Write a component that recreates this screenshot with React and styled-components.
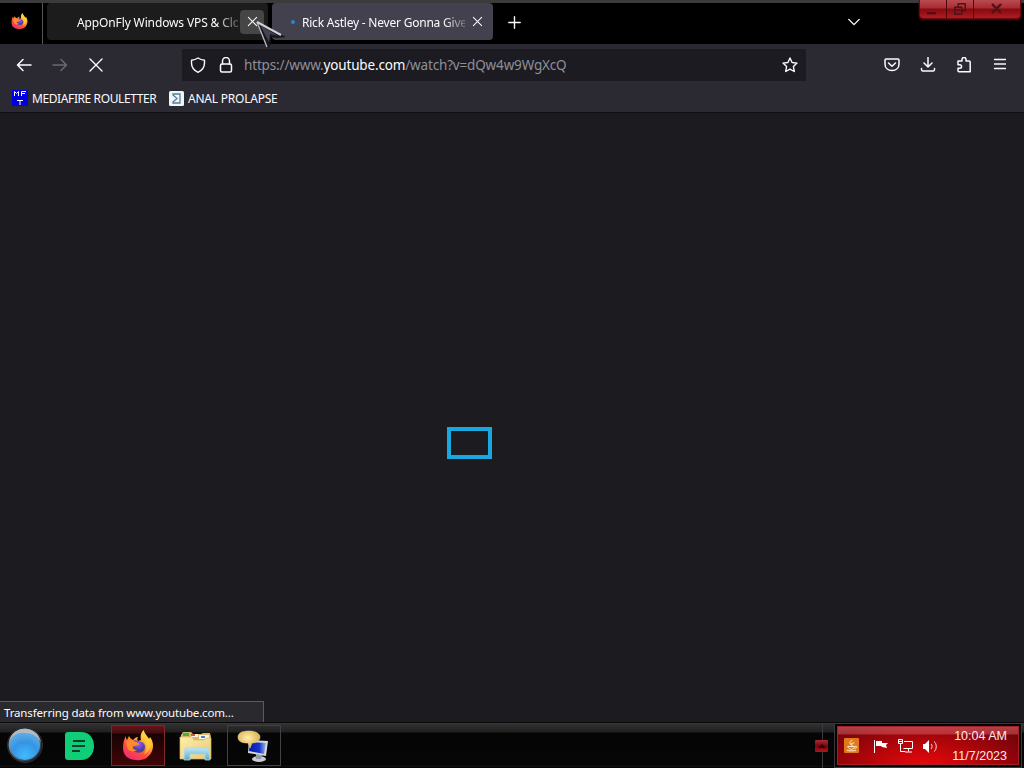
import React from "react";
import styled, { createGlobalStyle } from "styled-components";

const GlobalStyle = createGlobalStyle`
  * {
    box-sizing: border-box;
  }
  body {
    margin: 0;
    background: #1c1b22;
    overflow: hidden;
  }
`;

const Desktop = styled.div`
  position: relative;
  display: flex;
  flex-direction: column;
  width: 1024px;
  height: 768px;
  overflow: hidden;
  background: #1c1b20;
  color: #fbfbfe;
  font-family: "Noto Sans", "Open Sans", sans-serif;
  font-size: 12px;
  white-space: nowrap;

  svg {
    display: block;
    flex: none;
  }
`;

const TabStrip = styled.div`
  display: flex;
  flex: 0 0 44px;
  border-top: 3px solid #3b3b3c;
  background: #000;
`;

const PinnedLogo = styled.div`
  display: flex;
  width: 43px;
  padding: 10px 0 0 11px;
  border-right: 1px solid #55555a;
`;

const Tab = styled.div`
  display: flex;
  align-items: center;
  width: ${(p) => p.$width}px;
  height: 37px;
  margin-left: ${(p) => p.$gap}px;
  padding-left: ${(p) => p.$inset}px;
  border-radius: 4px;
  background: ${(p) => (p.$active ? "#42414d" : "#1c1c1d")};
`;

const TabTitle = styled.div`
  width: ${(p) => p.$width}px;
  padding-top: 2px;
  line-height: 20px;
  letter-spacing: ${(p) => p.$spacing}px;
  mask-image: linear-gradient(to left, rgba(0, 0, 0, 0.25), #000 22px);
`;

const CloseButton = styled.div`
  display: flex;
  align-items: center;
  justify-content: center;
  width: 24px;
  height: 24px;
  margin-left: ${(p) => (p.$hover ? 2 : 0)}px;
  border-radius: 4px;
  background: ${(p) => (p.$hover ? "#464646" : "transparent")};
`;

const LoadingDot = styled.div`
  width: 4px;
  height: 4px;
  margin-right: 7px;
  border-radius: 50%;
  background: #2584d8;
`;

const NewTab = styled.div`
  padding: 13px 0 0 15px;
`;

const ListTabs = styled.div`
  margin-left: auto;
  padding: 12px 58px 0 0;
`;

const WindowButtons = styled.div`
  display: flex;
  width: 102px;
  height: 19px;
  margin: -3px 3px 0 0;
  border: 1px solid #690b10;
  border-top: 0;
  border-radius: 0 0 4px 4px;
  box-shadow: 0 1px 2px #5a0d0d;
  background: linear-gradient(#b84c50 0, #a92a30 45%, #810b11 50%, #b51a20 100%);
`;

const WindowButton = styled.div`
  display: flex;
  justify-content: center;
  width: ${(p) => p.$width}px;
  padding-top: 2px;
  border-right: 1px solid #4e060a;

  &:last-child {
    border-right: 0;
  }
`;

const NavBar = styled.div`
  display: flex;
  align-items: center;
  flex: 0 0 41px;
  padding: 0 16px;
  background: #2b2a33;
`;

const NavButtons = styled.div`
  display: flex;
  gap: 20px;
  width: 166px;
`;

const UrlBar = styled.div`
  display: flex;
  align-items: center;
  width: 624px;
  height: 32px;
  padding: 0 8px;
  gap: 12px;
  background: #1c1b22;
`;

const Url = styled.div`
  flex: 1;
  margin-left: -2px;
  color: #8f8f98;
  font-size: 13.5px;
  letter-spacing: ${(p) => p.$spacing}px;

  b {
    color: #fbfbfe;
    font-weight: 400;
  }
`;

const NavActions = styled.div`
  display: flex;
  gap: 20px;
  margin-left: auto;
`;

const Bookmarks = styled.div`
  display: flex;
  align-items: center;
  flex: 0 0 28px;
  gap: 12px;
  padding: 0 0 1px 12px;
  border-bottom: 1px solid #101014;
  background: #2b2a33;
`;

const Bookmark = styled.div`
  display: flex;
  align-items: center;
  gap: 4px;
  width: ${(p) => p.$width}px;
  letter-spacing: ${(p) => p.$spacing}px;
`;

const Page = styled.main`
  display: flex;
  flex: 1;
  flex-direction: column;
  justify-content: space-between;
  background: #1c1b20;
`;

const LoadingFrame = styled.div`
  width: 45px;
  height: 32px;
  margin: 314px 0 0 447px;
  border: 4px solid #18a7df;
`;

const StatusBar = styled.div`
  width: 264px;
  height: 21px;
  padding-left: 4px;
  border: 1px solid #5c5b62;
  border-width: 1px 1px 0 0;
  background: #2a2a2e;
  font-size: 11.5px;
  line-height: 22px;
  letter-spacing: ${(p) => p.$spacing}px;
`;

const Taskbar = styled.footer`
  display: flex;
  flex: 0 0 46px;
  border-top: 1px solid #08080a;
  background: linear-gradient(#414143 0, #303032 1px, #202021 9px, #050506 10px, #060607 42px, #111 43px, #000 100%);
`;

const TaskItem = styled.div`
  display: flex;
  align-items: center;
  justify-content: center;
  width: ${(p) => p.$width || 54}px;
  height: 41px;
  margin: 2px 4px 0 0;
  border: 1px solid ${(p) => p.$border || "transparent"};
  background: ${(p) =>
    p.$red ? "linear-gradient(#671517 0, #440d0f 7px, #180304 8px, #410507 100%)" : "transparent"};
`;

const TrayHandle = styled.div`
  display: flex;
  align-items: center;
  width: 22px;
  margin-left: auto;
  background: linear-gradient(#3b3b3d, #3b3b3d) 7px 0 / 1px 100% no-repeat;
`;

const TrayArrow = styled.div`
  display: flex;
  align-items: center;
  justify-content: center;
  width: 13px;
  height: 12px;
  border-radius: 1px;
  background: linear-gradient(#a92c35, #78050c 50%, #a71920);
`;

const Tray = styled.div`
  display: flex;
  align-items: center;
  width: 182px;
  height: 39px;
  margin: 3px 5px 0 0;
  padding: 0 11px 0 6px;
  border: 1px solid #a52027;
  box-shadow: 0 0 0 2px #060304, 0 0 0 3px #39393b;
  background:
    linear-gradient(rgba(255, 155, 160, 0.4) 0, rgba(255, 125, 130, 0.35) 7px, transparent 8px),
    radial-gradient(ellipse at 48% 115%, #f2080b 0, #bd060a 38%, #78040a 85%);
`;

const TrayIcons = styled.div`
  display: grid;
  grid-template-columns: 29px 25px 24px 16px;
  align-items: center;
`;

const Clock = styled.div`
  margin-left: auto;
  color: #ffeaea;
  font-family: "Liberation Sans", Arial, sans-serif;
  font-size: 12.5px;
  line-height: 20px;
  text-align: right;
`;

const Pointer = styled.div`
  position: absolute;
  top: 20px;
  left: 255px;
`;

const Stroke = ({ size = 16, box = 16, width = 1.3, color = "#fbfbfe", children }) => (
  <svg
    width={size}
    height={size}
    viewBox={`0 0 ${box} ${box}`}
    fill="none"
    stroke={color}
    strokeWidth={width}
    strokeLinecap="round"
    strokeLinejoin="round"
  >
    {children}
  </svg>
);

const Cross = ({ size, width }) => (
  <Stroke size={size} width={width}>
    <path d="M2 2l12 12M14 2L2 14" />
  </Stroke>
);

const FirefoxLogo = ({ size, id }) => (
  <svg width={size} height={size} viewBox="0 0 32 32">
    <defs>
      <linearGradient id={`${id}-flame`} x1="0.8" y1="0" x2="0.2" y2="1">
        <stop offset="0" stopColor="#fff04a" />
        <stop offset="0.35" stopColor="#ffb02f" />
        <stop offset="0.65" stopColor="#ff5038" />
        <stop offset="1" stopColor="#ed267e" />
      </linearGradient>
      <radialGradient id={`${id}-globe`} cx="0.5" cy="0.3">
        <stop offset="0" stopColor="#a15bff" />
        <stop offset="1" stopColor="#4940a8" />
      </radialGradient>
    </defs>
    <path
      fill={`url(#${id}-flame)`}
      d="M4 6c0 2 0 3 1 4l2-4c1 2 2 3 4 4 2-2 3-3 5-3-1 2-1 3 0 4l3-1c-1-4 0-8 3-10 0 4 4 6 5 9l1-2c3 4 4 9 2 14-3 7-9 10-16 9C6 30 1 25 1 18 1 13 2 9 4 6z"
    />
    <path
      fill={`url(#${id}-globe)`}
      d="M10 12c2-2 4-2 6-1l4 1c4 2 4 8 0 10-5 2-10-1-10-5l4-1c3-1 4-2 2-3z"
    />
    <path fill="#ff8b2c" d="M4 12c2-2 5-2 7-1l4 1c1 2-1 3-4 4-1 2 1 4 4 4-4 3-9 1-10-3z" />
    <path fill="#ffd23c" d="M20 8c5 4 6 11 2 16 7-3 9-11 4-16l-4-6c-2 1-3 4-2 6z" opacity="0.65" />
  </svg>
);

const StartOrb = () => (
  <svg width="38" height="38" viewBox="0 0 38 38">
    <defs>
      <radialGradient id="orb-face" cx="0.5" cy="0.85" r="0.8">
        <stop offset="0" stopColor="#45b9ff" />
        <stop offset="0.55" stopColor="#3495e4" />
        <stop offset="1" stopColor="#67afe4" />
      </radialGradient>
      <linearGradient id="orb-ring" x1="0" y1="0" x2="1" y2="1">
        <stop offset="0" stopColor="#bbb" />
        <stop offset="0.45" stopColor="#686d70" />
        <stop offset="1" stopColor="#182029" />
      </linearGradient>
    </defs>
    <circle cx="19" cy="18" r="17.5" fill="#0c1218" stroke="#27323b" />
    <circle cx="19" cy="18" r="16.5" fill="url(#orb-ring)" />
    <circle cx="19" cy="18" r="15" fill="url(#orb-face)" />
    <path
      d="M3 14C6 5 13 1 21 2c8 1 12 6 14 13-4-6-9-9-16-9-7-1-12 2-16 8z"
      fill="#b9bdc0"
      opacity="0.9"
    />
  </svg>
);

const DocsLogo = () => (
  <svg width="30" height="28" viewBox="0 0 30 28">
    <path d="M3 0h13c8 0 13 6 13 14s-5 14-13 14H3c-2 0-3-1-3-3V3c0-2 1-3 3-3z" fill="#10ce78" />
    <path d="M8 9h12M7 14h13M7 19h8" stroke="#073f2b" strokeWidth="2" />
  </svg>
);

const Folder = () => (
  <svg width="34" height="32" viewBox="0 0 34 32">
    <defs>
      <linearGradient id="folder-face" x1="0" y1="0" x2="1" y2="1">
        <stop offset="0" stopColor="#fff0ac" />
        <stop offset="1" stopColor="#e4c775" />
      </linearGradient>
      <linearGradient id="folder-stand" x1="0" y1="0" x2="0" y2="1">
        <stop offset="0" stopColor="#c2e7f2" />
        <stop offset="1" stopColor="#53aad0" />
      </linearGradient>
    </defs>
    <path d="M2 5l2-3h8l2 2h8l2-1h7l1 4v22H2z" fill="#d9ba62" />
    <path d="M4 3h6v3H4z" fill="#42ad52" />
    <path d="M12 4h7v3h-7zM20 5h10v4H20z" fill="#f7f7ef" />
    <path d="M12 4h4v2h-4z" fill="#dc553c" />
    <path d="M22 6h4v2h-4z" fill="#428ac1" />
    <path d="M1 7h12l2 3h10l2-2h5v21H1z" fill="url(#folder-face)" stroke="#d5b768" strokeWidth="0.7" />
    <path
      d="M6 18h23l2 12h-5v-6H11v6H5z"
      fill="url(#folder-stand)"
      stroke="#a5d8e8"
      strokeWidth="0.8"
    />
  </svg>
);

const ChatMonitor = () => (
  <svg width="34" height="34" viewBox="0 0 34 34">
    <defs>
      <radialGradient id="bubble-fill" cx="0.45" cy="0.4">
        <stop offset="0" stopColor="#fff0ac" />
        <stop offset="1" stopColor="#dfb65a" />
      </radialGradient>
      <linearGradient id="monitor-fill">
        <stop offset="0" stopColor="#0718aa" />
        <stop offset="0.6" stopColor="#1632c9" />
        <stop offset="1" stopColor="#9cb4e8" />
      </linearGradient>
    </defs>
    <ellipse cx="22" cy="30" rx="7" ry="3" fill="#c8ccce" />
    <path d="M19 25l6 1-1 4h-5z" fill="#919ba3" />
    <path d="M12 11l19 1-2 15-18-3z" fill="#d6d9dc" />
    <path d="M13 13l16 1-2 11-15-3z" fill="url(#monitor-fill)" />
    <path
      d="M12 2c7 0 11 3 11 6s-3 6-8 6l-2 5-2-5C4 14 1 12 1 8s4-6 11-6z"
      fill="url(#bubble-fill)"
      stroke="#f1dba0"
      strokeWidth="0.5"
    />
  </svg>
);

export default () => (
  <>
    <GlobalStyle />
    <Desktop>
      <TabStrip>
        <PinnedLogo>
          <FirefoxLogo size={17} id="small-fox" />
        </PinnedLogo>
        <Tab $width={221} $gap={4} $inset={30}>
          <TabTitle $width={161} $spacing={-0.13}>AppOnFly Windows VPS &amp; Clo</TabTitle>
          <CloseButton $hover>
            <Cross size={11} width={1.5} />
          </CloseButton>
        </Tab>
        <Tab $active $width={221} $gap={4} $inset={19}>
          <LoadingDot />
          <TabTitle $width={163} $spacing={-0.22}>Rick Astley - Never Gonna Give</TabTitle>
          <CloseButton>
            <Cross size={11} width={1.5} />
          </CloseButton>
        </Tab>
        <NewTab>
          <Stroke size={13} width={1.7}>
            <path d="M8 1v14M1 8h14" />
          </Stroke>
        </NewTab>
        <ListTabs>
          <Stroke size={14} width={1.6}>
            <path d="M2 5l6 6 6-6" />
          </Stroke>
        </ListTabs>
        <WindowButtons>
          <WindowButton $width={27}>
            <Stroke color="#4b0a0e" size={15} width={2}>
              <path d="M3 12h8" />
            </Stroke>
          </WindowButton>
          <WindowButton $width={28}>
            <Stroke color="#4b1419" size={14} width={1.7}>
              <path d="M6 6V2h8v8h-4M2 6h8v8H2zM4 9h4" />
            </Stroke>
          </WindowButton>
          <WindowButton $width={46}>
            <Stroke color="#4b1419" size={14} width={2.6}>
              <path d="M3 3l9 9M12 3l-9 9" />
            </Stroke>
          </WindowButton>
        </WindowButtons>
      </TabStrip>

      <NavBar>
        <NavButtons>
          <Stroke width={1.5}>
            <path d="M15 8H1.5M7 2.5L1.5 8 7 13.5" />
          </Stroke>
          <Stroke width={1.4} color="#6b6a73">
            <path d="M1 8h13.5M9 2.5L14.5 8 9 13.5" />
          </Stroke>
          <Cross size={16} width={1.4} />
        </NavButtons>
        <UrlBar>
          <Stroke width={1.4}>
            <path d="M8 1c2 1.3 4 2 6.5 2.2V6c0 4.5-2.6 7.5-6.5 9.3C4.1 13.5 1.5 10.5 1.5 6V3.2C4 3 6 2.300 8 1z" />
          </Stroke>
          <Stroke width={1.5}>
            <rect x="2.5" y="7" width="11" height="8" rx="1.5" />
            <path d="M4.5 7V4a3.500 3.500 0 0 1 7 0v3" />
          </Stroke>
          <Url $spacing={-0.16}>
            https://www.<b>youtube.com</b>/watch?v=dQw4w9WgXcQ
          </Url>
          <Stroke width={1.4}>
            <path d="M8 1l2.100 4.500 4.900.6-3.600 3.400.9 5L8 12.100l-4.300 2.400.9-5L1 6.100l4.900-.6z" />
          </Stroke>
        </UrlBar>
        <NavActions>
          <Stroke width={1.5}>
            <path d="M2 2h12c.6 0 1 .4 1 1v4c0 4-3 6.500-7 6.500S1 11 1 7V3c0-.6.4-1 1-1zM4.500 6L8 9.300 11.500 6" />
          </Stroke>
          <Stroke width={1.5}>
            <path d="M8 0v9.500M4 6L8 10l4-4M1.500 11.500v1c0 1 .7 1.500 1.500 1.500h10c.8 0 1.500-.5 1.500-1.500v-1" />
          </Stroke>
          <Stroke width={1.5}>
            <path d="M2 4h4V2.500a2 2 0 1 1 4 0V4h3c.8 0 1.200.4 1.200 1.200v9.600H3c-.7 0-1-.4-1-1v-2.500h1.800a1.700 1.700 0 0 0 0-3.500H2z" />
          </Stroke>
          <Stroke width={1.3}>
            <path d="M2.500 2.500h11M2.500 7h11M2.500 11.500h11" />
          </Stroke>
        </NavActions>
      </NavBar>

      <Bookmarks>
        <Bookmark $width={145} $spacing={-0.4}>
          <svg width="16" height="16" viewBox="0 0 16 16">
            <path fill="#0000df" d="M0 0h16v16H0z" />
            <path d="M2.500 6V1.500l2 2 2-2V6M9.500 6V1.500H14M9.500 3.500H13M5 10.500h6M8 10.500V15" fill="none" stroke="#fff" />
          </svg>
          MEDIAFIRE ROULETTER
        </Bookmark>
        <Bookmark $width={120} $spacing={-0.22}>
          <svg width="15" height="15" viewBox="0 0 15 15">
            <rect width="15" height="15" rx="1.5" fill="#f0f5f8" />
            <path d="M4 4V3h7v9H4v-1l4-3.500z" fill="none" stroke="#4d809e" strokeWidth="1.300" />
          </svg>
          ANAL PROLAPSE
        </Bookmark>
      </Bookmarks>

      <Page>
        <LoadingFrame />
        <StatusBar $spacing={-0.15}>Transferring data from www.youtube.com...</StatusBar>
      </Page>

      <Taskbar>
        <TaskItem $width={49}>
          <StartOrb />
        </TaskItem>
        <TaskItem>
          <DocsLogo />
        </TaskItem>
        <TaskItem $red $border="#80272b">
          <FirefoxLogo size={32} id="large-fox" />
        </TaskItem>
        <TaskItem>
          <Folder />
        </TaskItem>
        <TaskItem $border="#424245">
          <ChatMonitor />
        </TaskItem>
        <TrayHandle>
          <TrayArrow>
            <svg width="8" height="4">
              <path d="M0 4L4 0l4 4z" fill="#330308" />
            </svg>
          </TrayArrow>
        </TrayHandle>
        <Tray>
          <TrayIcons>
            <svg width="15" height="15" viewBox="0 0 16 16">
              <rect width="16" height="16" rx="1" fill="#df791b" />
              <path
                d="M9 2L6 5l2 3M11 5L8 6l1 2M4 9h7c0 4-6 4-7 0zM3 13c2 1 8 1 10 0M11 9c4-1 3 2 0 2"
                fill="none"
                stroke="#fff2db"
              />
            </svg>
            <svg width="16" height="16" viewBox="0 0 16 16">
              <path d="M1.500 2v13" stroke="#fff" />
              <path d="M3 3h6v2h6l-2 2 1 3-5-1-1-1H3z" fill="#fff" />
            </svg>
            <svg width="16" height="16" viewBox="0 0 16 16" fill="none" stroke="#fff">
              <path d="M6 3.500h8.500v7H5.500M10.500 10.500v3M7 14h7M2.500 6v7.500H7" />
              <path d="M.5 1.500h4v4h-4zM.5 3.500h4" />
            </svg>
            <svg width="16" height="16" viewBox="0 0 16 16">
              <path d="M1 6h2l4-4v13l-4-4H1z" fill="#fff" />
              <path d="M9 6c1.500 1 1.500 4 0 5M12 3.500c3 2 3 8 0 10" fill="none" stroke="#ffd6d6" />
            </svg>
          </TrayIcons>
          <Clock>
            10:04 AM
            <br />
            11/7/2023
          </Clock>
        </Tray>
      </Taskbar>

      <Pointer>
        <svg width="32" height="30" viewBox="0 0 32 30">
          <path d="M2 2l29 15-9 1-6-1-1 10-3 1z" fill="#17171f" />
          <path d="M5 5l18 11-8-2-1 8z" fill="#454352" />
          <path d="M2 2l10 25" fill="none" stroke="#b5b5bb" strokeWidth="1.400" />
          <path d="M2 2l24 13" fill="none" stroke="#d0d0d6" strokeWidth="2" />
        </svg>
      </Pointer>
    </Desktop>
  </>
);
